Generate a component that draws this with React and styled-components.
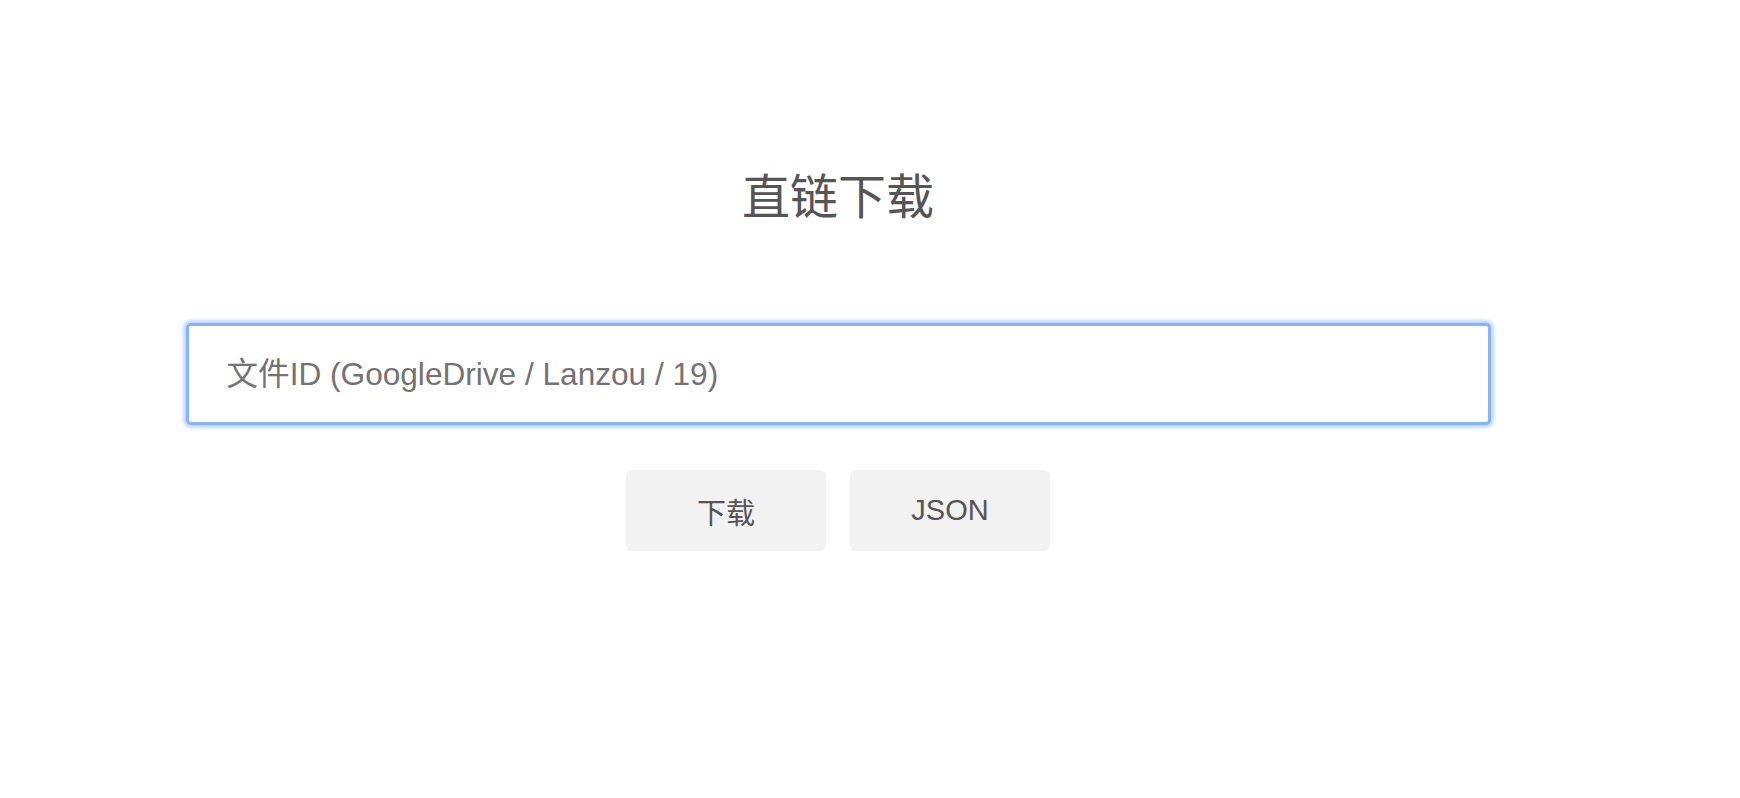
import React from "react";
import styled, { createGlobalStyle } from "styled-components";

const Global = createGlobalStyle`
  html, body { margin: 0; padding: 0; background: #fff; }
  body { font-family: "Liberation Sans", "Noto Sans CJK SC", sans-serif; }
`;

const Page = styled.div`
  display: flex;
  flex-direction: column;
  align-items: center;
  width: 1676px;
  padding-top: 169px;
  min-height: 798px;
  box-sizing: border-box;
`;

const Title = styled.h1`
  margin: 0;
  font-family: "Noto Sans CJK SC", sans-serif;
  font-weight: 400;
  font-size: 48px;
  line-height: 48px;
  color: #555555;
`;

const Input = styled.input`
  margin-top: 106px;
  width: 1305px;
  height: 102px;
  box-sizing: border-box;
  border: 3px solid #88b4f4;
  border-radius: 5px;
  box-shadow: 0 0 4px 1.5px rgba(120, 170, 245, 0.65);
  outline: none;
  padding: 0 0 0 38px;
  font-family: "Liberation Sans", "Noto Sans CJK SC", sans-serif;
  font-size: 31.6px;
  color: #333;
  &::placeholder { color: #737373; }
`;

const Actions = styled.div`
  display: flex;
  gap: 24px;
  margin-top: 45px;
`;

const Button = styled.button`
  width: 200px;
  height: 81px;
  border: none;
  border-radius: 6px;
  background: #f2f2f3;
  color: #555555;
  font-family: "Liberation Sans", "Noto Sans CJK SC", sans-serif;
  font-size: 29px;
  cursor: pointer;
`;

export default function App() {
  return (
    <>
      <Global />
      <Page>
        <Title>直链下载</Title>
        <Input placeholder="文件ID (GoogleDrive / Lanzou / 19)" />
        <Actions>
          <Button>下载</Button>
          <Button>JSON</Button>
        </Actions>
      </Page>
    </>
  );
}
